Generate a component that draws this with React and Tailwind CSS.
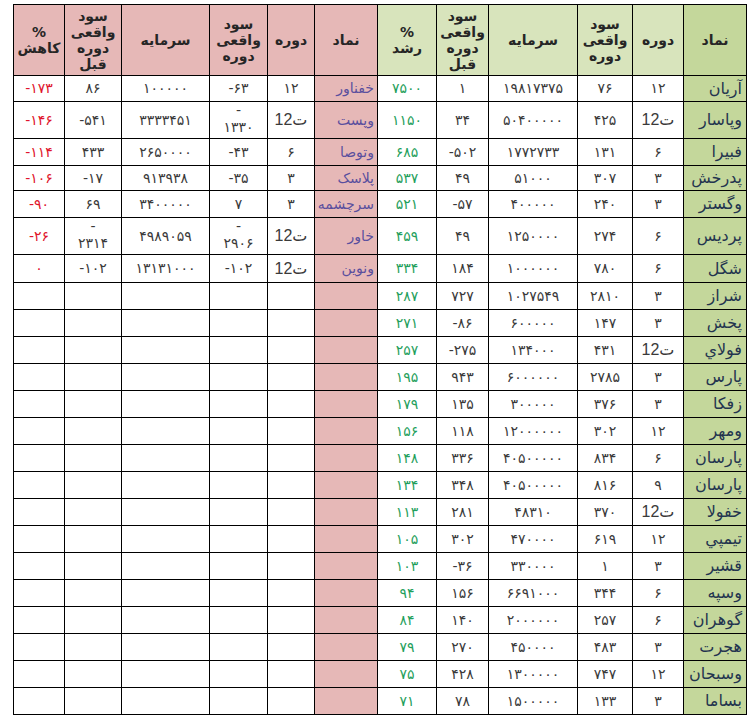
import React from "react";

// ستون‌ها از راست به چپ: نماد، دوره، سود واقعی دوره، سرمایه، سود واقعی دوره قبل، درصد
const rishd = [
  ["آریان", "۱۲", "۷۶", "۱۹۸۱۷۳۷۵", "۱", "۷۵۰۰"],
  ["وپاسار", "ت12", "۴۲۵", "۵۰۴۰۰۰۰۰", "۳۴", "۱۱۵۰"],
  ["فبیرا", "۶", "۱۳۱", "۱۷۷۲۷۳۳", "-۵۰۲", "۶۸۵"],
  ["پدرخش", "۳", "۳۰۷", "۵۱۰۰۰", "۴۹", "۵۳۷"],
  ["وگستر", "۳", "۲۴۰", "۴۰۰۰۰۰", "-۵۷", "۵۲۱"],
  ["پردیس", "۶", "۲۷۴", "۱۲۵۰۰۰۰", "۴۹", "۴۵۹"],
  ["شگل", "۶", "۷۸۰", "۱۰۰۰۰۰۰", "۱۸۴", "۳۳۴"],
  ["شراز", "۳", "۲۸۱۰", "۱۰۲۷۵۴۹", "۷۲۷", "۲۸۷"],
  ["پخش", "۳", "۱۴۷", "۶۰۰۰۰۰", "-۸۶", "۲۷۱"],
  ["فولاي", "ت12", "۴۳۱", "۱۳۴۰۰۰", "-۲۷۵", "۲۵۷"],
  ["پارس", "۳", "۲۷۸۵", "۶۰۰۰۰۰۰", "۹۴۳", "۱۹۵"],
  ["زفکا", "۳", "۳۷۶", "۳۰۰۰۰۰", "۱۳۵", "۱۷۹"],
  ["ومهر", "۱۲", "۳۰۲", "۱۲۰۰۰۰۰۰", "۱۱۸", "۱۵۶"],
  ["پارسان", "۶", "۸۳۴", "۴۰۵۰۰۰۰۰", "۳۳۶", "۱۴۸"],
  ["پارسان", "۹", "۸۱۶", "۴۰۵۰۰۰۰۰", "۳۴۸", "۱۳۴"],
  ["خفولا", "ت12", "۳۷۰", "۴۸۳۱۰", "۲۸۱", "۱۱۳"],
  ["تیمپي", "۱۲", "۶۱۹", "۴۷۰۰۰۰", "۳۰۲", "۱۰۵"],
  ["قشیر", "۳", "۱", "۳۳۰۰۰۰", "-۳۶", "۱۰۳"],
  ["وسپه", "۶", "۳۴۴", "۶۶۹۱۰۰۰", "۱۵۶", "۹۴"],
  ["گوهران", "۶", "۲۵۷", "۲۰۰۰۰۰۰", "۱۴۰", "۸۴"],
  ["هجرت", "۳", "۴۸۳", "۴۵۰۰۰۰", "۲۷۰", "۷۹"],
  ["وسبحان", "۱۲", "۷۴۷", "۱۳۰۰۰۰۰", "۴۲۸", "۷۵"],
  ["بساما", "۳", "۱۳۳", "۱۵۰۰۰۰۰", "۷۸", "۷۱"],
];

const kahesh = [
  ["خفناور", "۱۲", "-۶۳", "۱۰۰۰۰۰", "۸۶", "-۱۷۳"],
  ["وپست", "ت12", ["-", "۱۳۳۰"], "۳۳۳۳۴۵۱", "-۵۴۱", "-۱۴۶"],
  ["وتوصا", "۶", "-۴۳", "۲۶۵۰۰۰۰", "۴۳۳", "-۱۱۴"],
  ["پلاسک", "۳", "-۳۵", "۹۱۳۹۳۸", "-۱۷", "-۱۰۶"],
  ["سرچشمه", "۳", "۷", "۳۴۰۰۰۰۰", "۶۹", "-۹۰"],
  ["خاور", "ت12", ["-", "۲۹۰۶"], "۴۹۸۹۰۵۹", ["-", "۲۳۱۴"], "-۲۶"],
  ["ونوین", "ت12", "-۱۰۲", "۱۳۱۳۱۰۰۰", "-۱۰۲", "۰"],
];

const heights = [
  "h-[26px]", "h-[37px]", "h-[27px]", "h-[25px]", "h-[27px]", "h-[37px]", "h-[28px]",
  "h-[27px]", "h-[27px]", "h-[27px]", "h-[27px]", "h-[27px]", "h-[27px]", "h-[27px]", "h-[27px]",
  "h-[27px]", "h-[27px]", "h-[27px]", "h-[27px]", "h-[27px]", "h-[27px]", "h-[27px]", "h-[27px]",
];

const Val = ({ v }) => {
  if (Array.isArray(v)) {
    return (
      <span dir="ltr" className="inline-block leading-[17px]">
        {v[0]}
        <br />
        {v[1]}
      </span>
    );
  }
  return <span dir="ltr">{v}</span>;
};

const cell = "border border-black text-center align-middle p-0";

function Header({ tone, last }) {
  const bg = tone === "green" ? "bg-[#d8e4bc]" : "bg-[#e6b8b7]";
  const nameBg = tone === "green" ? "bg-[#c4d79b]" : "bg-[#e6b8b7]";
  const th = `${cell} ${bg} font-bold text-[14px] leading-[16px] text-[#262626]`;
  return (
    <>
      <th className={`${cell} ${nameBg} font-bold text-[14px] text-[#262626]`}>نماد</th>
      <th className={th}>دوره</th>
      <th className={th}>
        سود
        <br />
        واقعی
        <br />
        دوره
      </th>
      <th className={th}>سرمایه</th>
      <th className={th}>
        سود
        <br />
        واقعی
        <br />
        دوره
        <br />
        قبل
      </th>
      <th className={th}>
        %
        <br />
        {last}
      </th>
    </>
  );
}

function Cells({ row, tone }) {
  if (!row) {
    return (
      <>
        <td className={`${cell} bg-[#e6b8b7]`}></td>
        <td className={cell}></td>
        <td className={cell}></td>
        <td className={cell}></td>
        <td className={cell}></td>
        <td className={cell}></td>
      </>
    );
  }
  const [name, dore, sood, sarmaye, ghabl, pct] = row;
  const nameCls =
    tone === "green"
      ? "bg-[#c4d79b] text-[#23344f] text-[16px] pr-[4px]"
      : "bg-[#e6b8b7] text-[#5a4f9e] text-[14px] pr-[3px]";
  const pctCls = tone === "green" ? "text-[#1fa05c]" : "text-[#e0142c]";
  const num = `${cell} text-[14px] text-[#3a3a3a]`;
  const latin = dore.includes("12");
  return (
    <>
      <td className={`border border-black p-0 text-right align-middle whitespace-nowrap ${nameCls}`}>{name}</td>
      {latin ? (
        <td className={`${cell} text-[16px] text-[#3a3a3a] font-['Liberation_Sans','DejaVu_Sans',sans-serif]`}>{dore}</td>
      ) : (
        <td className={num}>
          <Val v={dore} />
        </td>
      )}
      <td className={num}>
        <Val v={sood} />
      </td>
      <td className={num}>
        <Val v={sarmaye} />
      </td>
      <td className={num}>
        <Val v={ghabl} />
      </td>
      <td className={`${cell} text-[14px] ${pctCls}`}>
        <Val v={pct} />
      </td>
    </>
  );
}

export default function App() {
  return (
    <div className="min-h-screen bg-white pl-[13px] pt-[4px] font-['DejaVu_Sans',sans-serif]">
      <table dir="rtl" className="w-[733px] table-fixed border-collapse">
        <colgroup>
          <col className="w-[63px]" />
          <col className="w-[51px]" />
          <col className="w-[55px]" />
          <col className="w-[89px]" />
          <col className="w-[52px]" />
          <col className="w-[59px]" />
          <col className="w-[63px]" />
          <col className="w-[47px]" />
          <col className="w-[58px]" />
          <col className="w-[88px]" />
          <col className="w-[57px]" />
          <col className="w-[51px]" />
        </colgroup>
        <thead>
          <tr className="h-[71px]">
            <Header tone="green" last="رشد" />
            <Header tone="pink" last="کاهش" />
          </tr>
        </thead>
        <tbody>
          {rishd.map((row, i) => (
            <tr key={i} className={heights[i]}>
              <Cells row={row} tone="green" />
              <Cells row={kahesh[i]} tone="pink" />
            </tr>
          ))}
        </tbody>
      </table>
    </div>
  );
}
